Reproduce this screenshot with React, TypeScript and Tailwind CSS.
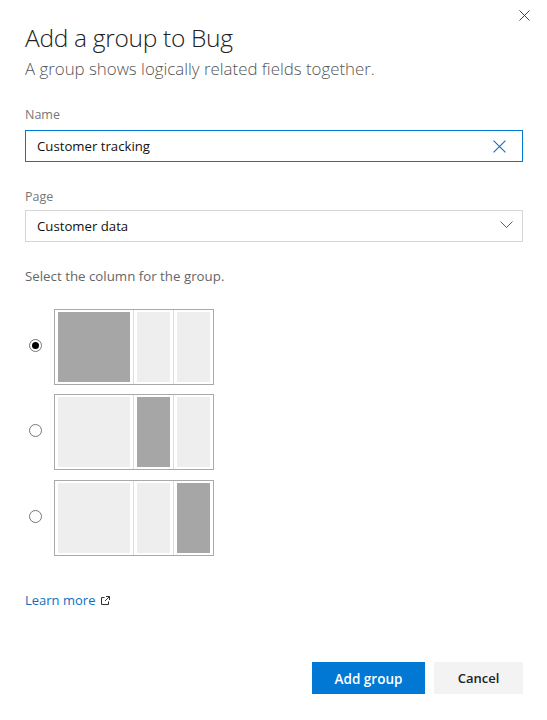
const font = { fontFamily: '"Open Sans", "Noto Sans", sans-serif' };

function X({ className }: { className: string }) {
  return (
    <svg viewBox="0 0 12 12" className={className} fill="none" stroke="currentColor" strokeWidth="1">
      <path d="M0.5 0.5L11.5 11.5M11.5 0.5L0.5 11.5" />
    </svg>
  );
}

function Radio({ checked }: { checked?: boolean }) {
  return (
    <div className="w-[13px] h-[13px] rounded-full border border-[#767676] flex items-center justify-center shrink-0">
      {checked && <div className="w-[7px] h-[7px] rounded-full bg-black" />}
    </div>
  );
}

function Layout({ active, mt }: { active: number; mt: string }) {
  const c = (i: number) => (i === active ? "bg-[#a6a6a6]" : "bg-[#eeeeee]");
  return (
    <div className={`flex items-center ${mt}`}>
      <div className="w-[29px] pl-[4px] mb-[4px]">
        <Radio checked={active === 0} />
      </div>
      <div className="w-[160px] h-[76px] border border-[#aaaaaa] flex">
        <div className="w-[79px] py-[2px] pl-[3px] border-r border-[#dddddd]">
          <div className={`h-full w-[72px] ${c(0)}`} />
        </div>
        <div className="w-[40px] py-[2px] pl-[3px] border-r border-[#dddddd]">
          <div className={`h-full w-[33px] ${c(1)}`} />
        </div>
        <div className="flex-1 py-[2px] pl-[3px]">
          <div className={`h-full w-[33px] ${c(2)}`} />
        </div>
      </div>
    </div>
  );
}

export default function App() {
  return (
    <div style={font} className="w-[547px] h-[720px] bg-white relative pl-[25px] pr-[24px] pt-[20px] flex flex-col">
      <button className="absolute top-[10px] right-[17px] text-[#333333]">
        <X className="w-[11px] h-[11px]" />
      </button>
      <h1 className="text-[24.5px] leading-[36px] font-light text-[#222222] tracking-[-0.3px]">Add a group to Bug</h1>
      <p className="text-[16.85px] leading-[24px] font-light text-[#555555] mt-[1px]">
        A group shows logically related fields together.
      </p>

      <label className="text-[12.5px] leading-[18px] text-[#777777] mt-[25px]">Name</label>
      <div className="mt-[6px] h-[32px] border border-[#0078d4] flex items-center justify-between pl-[11px] pr-[16px]">
        <span className="text-[13.2px] text-[#111111] pt-[1px]">Customer tracking</span>
        <X className="w-[13px] h-[13px] text-[#106ebe]" />
      </div>

      <label className="text-[12.5px] leading-[18px] text-[#777777] mt-[26px]">Page</label>
      <div className="mt-[4px] h-[32px] border border-[#d6d6d6] flex items-center justify-between pl-[11px] pr-[9px]">
        <span className="text-[13.2px] text-[#111111] pt-[1px]">Customer data</span>
        <svg viewBox="0 0 13 7" className="w-[13px] h-[7px] text-[#106ebe] mb-[3px]" fill="none" stroke="currentColor" strokeWidth="1">
          <path d="M0.5 0.5L6.5 6.5L12.5 0.5" />
        </svg>
      </div>

      <p className="text-[13.3px] leading-[18px] text-[#666666] mt-[25px]">Select the column for the group.</p>

      <Layout active={0} mt="mt-[24px]" />
      <Layout active={1} mt="mt-[9px]" />
      <Layout active={2} mt="mt-[10px]" />

      <div className="flex items-center gap-[6px] mt-[35px]">
        <a className="text-[13px] leading-[18px] text-[#106ebe]">Learn more</a>
        <svg viewBox="0 0 9 9" className="w-[9px] h-[9px] text-[#333333]" fill="none" stroke="currentColor" strokeWidth="1">
          <path d="M3.5 1.5H0.5V8.5H7.5V5.5M4 5L8.5 0.5M5 0.5H8.5V4" />
        </svg>
      </div>

      <div className="flex justify-end gap-[9px] mt-[53px]">
        <button className="w-[113px] h-[32px] bg-[#0078d4] text-white text-[13.5px] font-semibold pt-[2px]">Add group</button>
        <button className="w-[89px] h-[32px] bg-[#f3f3f3] text-[#222222] text-[13px] font-semibold pt-[2px]">Cancel</button>
      </div>
    </div>
  );
}
